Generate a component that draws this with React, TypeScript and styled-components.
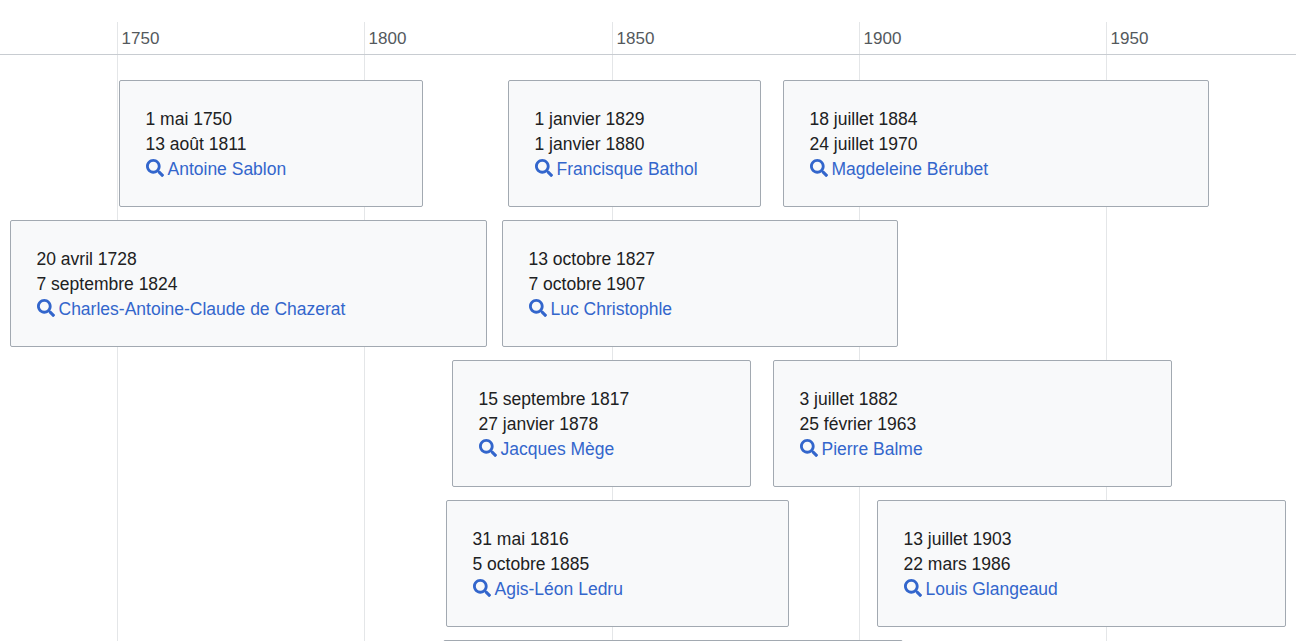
import React from "react";
import styled, { createGlobalStyle } from "styled-components";
import { FaSearch } from "react-icons/fa";

const PX_PER_YEAR = 4.945;
const ORIGIN_X = 117;
const toX = (year: number) => ORIGIN_X + (year - 1750) * PX_PER_YEAR;

const Global = createGlobalStyle`
  html, body { margin: 0; padding: 0; background: #fff; overflow: hidden; }
  body { font-family: "Liberation Sans", Arial, sans-serif; }
`;

const Page = styled.div`
  position: relative;
  width: 1296px;
  height: 641px;
  overflow: hidden;
  padding-top: 22px;
  box-sizing: border-box;
`;

const GridLine = styled.div`
  position: absolute;
  top: 22px;
  bottom: 0;
  width: 1px;
  background: #e4e6e8;
`;

const Axis = styled.div`
  position: relative;
  height: 32px;
  border-bottom: 1px solid #c8ccd1;
`;

const AxisLabel = styled.span`
  position: absolute;
  top: 7px;
  font-size: 17px;
  line-height: 20px;
  color: #54595d;
  padding-left: 4.6px;
`;

const Lanes = styled.div`
  position: relative;
  display: flex;
  flex-direction: column;
  gap: 13px;
  padding-top: 25px;
`;

const Lane = styled.div`
  position: relative;
  height: 127px;
  flex: none;
`;

const Card = styled.div`
  position: absolute;
  top: 0;
  height: 127px;
  box-sizing: border-box;
  padding: 26px 25.5px 24px;
  background: #f8f9fa;
  border: 1px solid #a2a9b1;
  border-radius: 2px;
  font-size: 17.5px;
  line-height: 25px;
  color: #202122;
  white-space: nowrap;
`;

const Line = styled.div`
  height: 25px;
`;

const PersonLink = styled.a`
  display: flex;
  align-items: center;
  gap: 4px;
  height: 25px;
  color: #3366cc;
  text-decoration: none;
  svg {
    width: 18px;
    height: 18px;
    margin-top: -4px;
    flex: none;
  }
`;

type Person = { start: string; end: string; name: string; from: number; to: number };

const lanes: Person[][] = [
  [
    { start: "1 mai 1750", end: "13 août 1811", name: "Antoine Sablon", from: 1750.33, to: 1811.85 },
    { start: "1 janvier 1829", end: "1 janvier 1880", name: "Francisque Bathol", from: 1829, to: 1880.15 },
    { start: "18 juillet 1884", end: "24 juillet 1970", name: "Magdeleine Bérubet", from: 1884.7, to: 1970.8 },
  ],
  [
    { start: "20 avril 1728", end: "7 septembre 1824", name: "Charles-Antoine-Claude de Chazerat", from: 1728.3, to: 1824.8 },
    { start: "13 octobre 1827", end: "7 octobre 1907", name: "Luc Christophle", from: 1827.78, to: 1907.85 },
  ],
  [
    { start: "15 septembre 1817", end: "27 janvier 1878", name: "Jacques Mège", from: 1817.7, to: 1878.2 },
    { start: "3 juillet 1882", end: "25 février 1963", name: "Pierre Balme", from: 1882.7, to: 1963.4 },
  ],
  [
    { start: "31 mai 1816", end: "5 octobre 1885", name: "Agis-Léon Ledru", from: 1816.5, to: 1885.85 },
    { start: "13 juillet 1903", end: "22 mars 1986", name: "Louis Glangeaud", from: 1903.7, to: 1986.4 },
  ],
  [{ start: "", end: "", name: "", from: 1816.0, to: 1909 }],
];

const years = [1750, 1800, 1850, 1900, 1950];

export default function App() {
  return (
    <Page>
      <Global />
      {years.map((y) => (
        <GridLine key={y} style={{ left: Math.round(toX(y)) }} />
      ))}
      <Axis>
        {years.map((y) => (
          <AxisLabel key={y} style={{ left: Math.round(toX(y)) }}>
            {y}
          </AxisLabel>
        ))}
      </Axis>
      <Lanes>
        {lanes.map((lane, i) => (
          <Lane key={i}>
            {lane.map((p) => (
              <Card
                key={p.from}
                style={{ left: Math.round(toX(p.from)), width: Math.round(toX(p.to) - toX(p.from)) }}
              >
                {p.name && (
                  <>
                    <Line>{p.start}</Line>
                    <Line>{p.end}</Line>
                    <PersonLink href="#">
                      <FaSearch />
                      {p.name}
                    </PersonLink>
                  </>
                )}
              </Card>
            ))}
          </Lane>
        ))}
      </Lanes>
    </Page>
  );
}
